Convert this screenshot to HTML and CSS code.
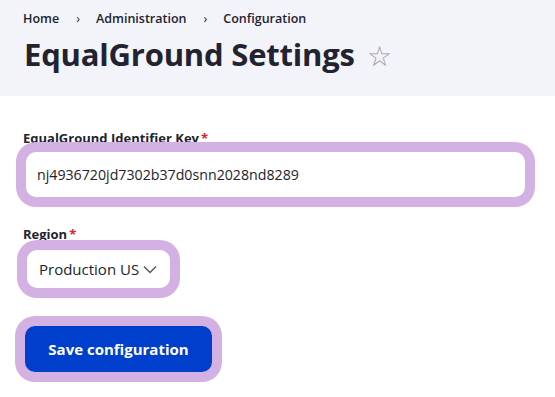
FILE: index.html
```html
<!DOCTYPE html>
<html lang="en">
<head>
<meta charset="utf-8">
<title>EqualGround Settings</title>
<link rel="stylesheet" href="styles.css">
</head>
<body>
<header class="page-header">
  <nav class="breadcrumb">
    <a class="crumb" href="#">Home</a>
    <span class="sep">›</span>
    <a class="crumb" href="#">Administration</a>
    <span class="sep">›</span>
    <a class="crumb" href="#">Configuration</a>
  </nav>
  <h1 class="title">EqualGround Settings <span class="star">☆</span></h1>
</header>
<main class="content">
  <form class="form">
    <div class="field field-key">
      <label class="label" for="key">EqualGround Identifier Key<span class="req">*</span></label>
      <input class="text-input" id="key" type="text" value="nj4936720jd7302b37d0snn2028nd8289">
    </div>
    <div class="field field-region">
      <label class="label" for="region">Region<span class="req">*</span></label>
      <div class="select">
        <span class="select-value">Production US</span>
        <svg class="chevron" width="14" height="9" viewBox="0 0 14 9"><path d="M1 1.5 L7 7.5 L13 1.5" fill="none" stroke="#55565b" stroke-width="1.4"/></svg>
      </div>
    </div>
    <div class="actions">
      <button class="btn" type="button">Save configuration</button>
    </div>
  </form>
</main>
</body>
</html>
```
FILE: styles.css
```css
* { box-sizing: border-box; }
html, body { margin: 0; padding: 0; background: #fff; }
body {
  font-family: "Open Sans", "Noto Sans", sans-serif;
  color: #222330;
  min-height: 397px;
}
.page-header {
  background: #f3f4f9;
  height: 96px;
  padding: 9px 24px 0 23px;
}
.breadcrumb {
  display: flex;
  align-items: center;
  font-size: 12.5px;
  font-weight: 600;
  line-height: 20px;
}
.crumb { color: #222330; text-decoration: none; }
.sep { margin: 0 16px 0 17px; font-weight: 400; }
.title {
  margin: 5px 0 0 1px;
  font-size: 31px;
  font-weight: 700;
  line-height: 40px;
  letter-spacing: -0.2px;
}
.star {
  font-weight: 400;
  color: #9a9aa3;
  font-size: 28px;
  margin-left: 4px;
}
.content { padding: 34px 30px 20px 26px; }
.label {
  display: block;
  font-size: 13px;
  font-weight: 700;
  line-height: 16px;
  margin-left: -3px;
}
.req { color: #dc2323; margin-left: 2px; }
.field-key .label { margin-bottom: 6px; }
.text-input {
  position: relative;
  display: block;
  width: 499px;
  height: 45px;
  border: none;
  border-radius: 10px;
  box-shadow: 0 0 0 10px #d3b1e3;
  padding: 0 11px;
  font-family: inherit;
  font-size: 14.2px;
  color: #222330;
  outline: none;
  background: #fff;
}
.field-region { margin-top: 29px; }
.field-region .label { margin-bottom: 8px; }
.select {
  position: relative;
  display: flex;
  align-items: center;
  width: 143px;
  height: 38px;
  margin-left: 1px;
  border-radius: 10px;
  box-shadow: 0 0 0 10px #d3b1e3;
  padding: 0 0 0 12px;
  font-size: 15px;
  background: #fff;
}
.chevron { margin-left: 4px; }
.actions { margin-top: 38px; }
.btn {
  display: block;
  width: 187px;
  height: 46px;
  margin-left: -1px;
  border: none;
  border-radius: 10px;
  background: #003ecc;
  color: #fff;
  font-family: inherit;
  font-size: 15px;
  font-weight: 700;
  box-shadow: 0 0 0 10px #d3b1e3;
}
```
